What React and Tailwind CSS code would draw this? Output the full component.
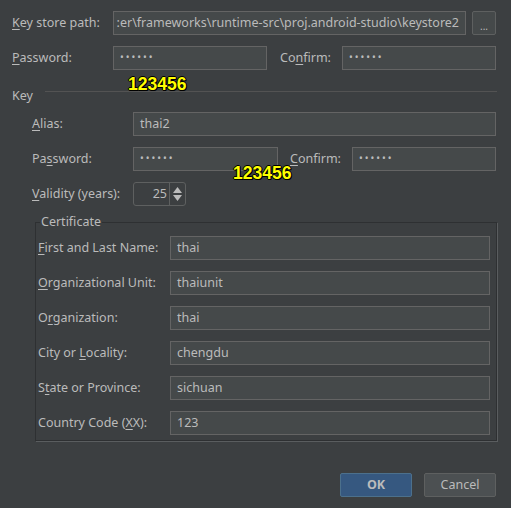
const Mn = ({ children }) => <span className="underline underline-offset-2">{children}</span>;

const Field = ({ value, className = "" }) => (
  <div className={`h-[24px] bg-[#45494a] border border-[#646464] flex items-center px-[6px] text-[#bbbbbb] whitespace-nowrap overflow-hidden ${className}`}>
    {value}
  </div>
);

const Dots = () => <span className="tracking-[2px] text-[10px] relative -top-[1px]">••••••</span>;

const Tag = ({ className }) => (
  <span
    className={`absolute font-bold text-[17.5px] leading-none text-[#ffff00] ${className}`}
    style={{ fontFamily: '"Liberation Sans", Arial, sans-serif', textShadow: "1px 1px 0 #000, -1px 0 0 #000, 0 -1px 0 #000, 1px 0 0 #000, 0 1px 0 #000" }}
  >
    123456
  </span>
);

const certRows = [
  [<><Mn>F</Mn>irst and Last Name:</>, "thai"],
  [<><Mn>O</Mn>rganizational Unit:</>, "thaiunit"],
  [<>O<Mn>r</Mn>ganization:</>, "thai"],
  [<>City or <Mn>L</Mn>ocality:</>, "chengdu"],
  [<>S<Mn>t</Mn>ate or Province:</>, "sichuan"],
  [<>Country Code (<Mn>X</Mn>X):</>, "123"],
];

export default function App() {
  return (
    <div
      className="relative w-[511px] h-[508px] bg-[#3c3f41] text-[#bbbbbb] text-[12.5px] pl-[12px] pr-[15px] pt-[11px] overflow-hidden"
      style={{ fontFamily: '"Noto Sans", "Open Sans", sans-serif' }}
    >
      {/* keystore */}
      <div className="flex items-center">
        <span className="w-[101px]"><Mn>K</Mn>ey store path:</span>
        <Field value=":er\frameworks\runtime-src\proj.android-studio\keystore2" className="flex-1 justify-end" />
        <button className="ml-[6px] w-[24px] h-[24px] border border-[#5e6060] bg-[#45494a] rounded-[2px] text-[10px] leading-none pb-[3px] flex items-end justify-center">...</button>
      </div>

      <div className="flex items-center mt-[11px]">
        <span className="w-[101px]"><Mn>P</Mn>assword:</span>
        <Field value={<Dots />} className="w-[154px]" />
        <span className="ml-[13px] w-[62px]">Co<Mn>n</Mn>firm:</span>
        <Field value={<Dots />} className="flex-1" />
      </div>

      {/* key group */}
      <div className="flex items-center mt-[17px] h-[12px]">
        <span className="leading-none mt-[6px]">Key</span>
        <div className="flex-1 h-px bg-[#535353] ml-[12px] mr-[-1px] -mt-[3px]" />
      </div>

      <div className="pl-[20px]">
        <div className="flex items-center mt-[13px]">
          <span className="w-[101px]"><Mn>A</Mn>lias:</span>
          <Field value="thai2" className="flex-1" />
        </div>
        <div className="flex items-center mt-[11px]">
          <span className="w-[101px]">Pa<Mn>s</Mn>sword:</span>
          <Field value={<Dots />} className="w-[145px]" />
          <span className="ml-[12px] w-[62px]"><Mn>C</Mn>onfirm:</span>
          <Field value={<Dots />} className="flex-1" />
        </div>
        <div className="flex items-center mt-[11px]">
          <span className="w-[101px]"><Mn>V</Mn>alidity (years):</span>
          <div className="h-[24px] w-[53px] border border-[#5e6060] rounded-[3px] flex bg-[#3c3f41]">
            <span className="flex-1 flex items-center justify-end pr-[2px]">25</span>
            <div className="w-[16px] border-l border-[#5e6060] flex flex-col items-center justify-center gap-[2px]">
              <svg width="9" height="6" viewBox="0 0 9 6"><path d="M4.5 0L9 6H0z" fill="#bbbbbb" /></svg>
              <svg width="9" height="6" viewBox="0 0 9 6"><path d="M0 0h9L4.5 6z" fill="#bbbbbb" /></svg>
            </div>
          </div>
        </div>

        {/* certificate */}
        <div className="relative mt-[16px] ml-[3px] mr-[-1px] h-[219px] border border-[#2e3032] shadow-[1px_1px_0_#5a5d5f] pl-[2px] pr-[6px] pt-[13px]">
          <span className="absolute -top-[9px] left-[4px] bg-[#3c3f41] px-[1px] leading-[16px]">Certificate</span>
          {certRows.map(([label, value], i) => (
            <div key={i} className={`flex items-center ${i ? "mt-[11px]" : ""}`}>
              <span className="w-[132px] whitespace-nowrap">{label}</span>
              <Field value={value} className="flex-1" />
            </div>
          ))}
        </div>
      </div>

      {/* buttons */}
      <div className="flex justify-end gap-[12px] mt-[32px]">
        <button className="w-[72px] h-[24px] bg-[#365880] border border-[#4c708c] rounded-[2px] font-bold text-[#bbbbbb]">OK</button>
        <button className="w-[72px] h-[24px] bg-[#4c5052] border border-[#5e6060] rounded-[2px] text-[#bbbbbb]">Cancel</button>
      </div>

      <Tag className="left-[128px] top-[76px]" />
      <Tag className="left-[233px] top-[165px]" />
    </div>
  );
}
